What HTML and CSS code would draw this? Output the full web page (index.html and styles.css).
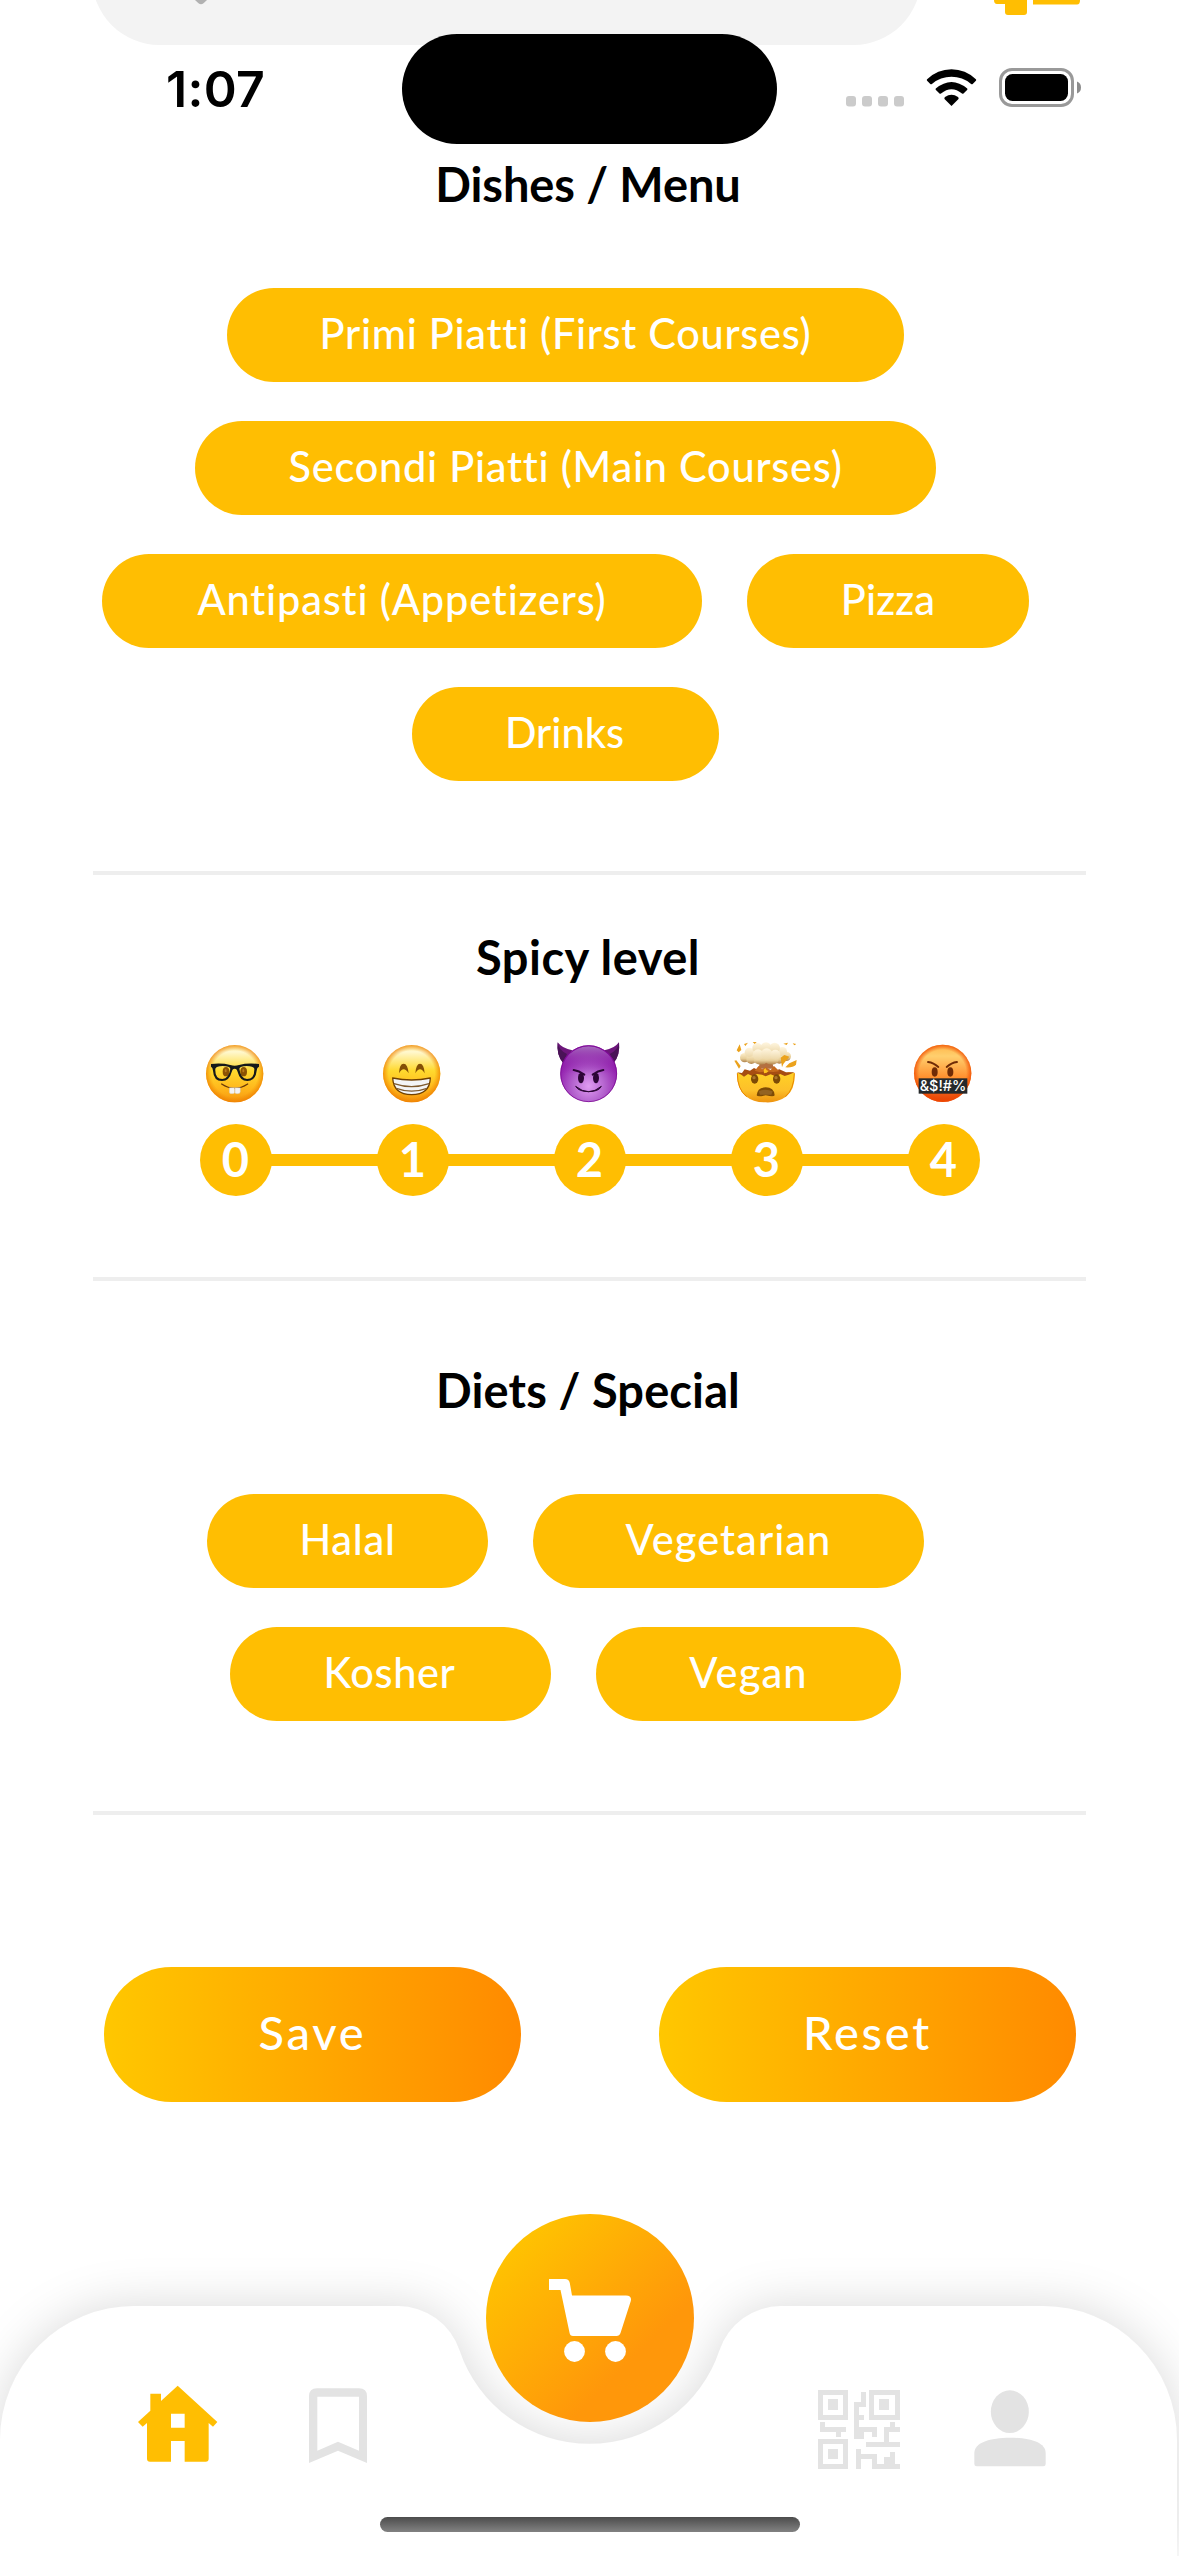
FILE: index.html
```html
<!DOCTYPE html>
<html lang="en">
<head>
<meta charset="utf-8">
<title>Filters</title>
<link rel="stylesheet" href="styles.css">
</head>
<body>
<div class="screen">
  <main class="content">
    <div class="search-row">
      <div class="search-bar">
        <svg class="search-mark" width="12" height="5" viewBox="0 0 12 5"><path d="M0 0H12L8.5 3.2Q6 5.2 3.5 3.2Z" fill="#b1b1b1"/></svg>
      </div>
      <svg class="filter-icon" width="87" height="16" viewBox="0 0 87 16" fill="#ffbe02">
        <path d="M0 0H33V12Q33 15 30 15H14Q11 15 11 12V4H3Q0 4 0 0Z"/>
        <path d="M39 0H86Q86 4.5 83 4.5H39Z"/>
      </svg>
    </div>

    <section class="group dishes">
      <h2 class="title">Dishes / Menu</h2>
      <div class="pills">
        <button class="pill w-primi">Primi Piatti (First Courses)</button>
        <button class="pill w-secondi">Secondi Piatti (Main Courses)</button>
        <button class="pill w-antipasti">Antipasti (Appetizers)</button>
        <button class="pill w-pizza">Pizza</button>
        <button class="pill w-drinks">Drinks</button>
      </div>
    </section>

    <section class="group spicy">
      <h2 class="title title-wide">Spicy level</h2>
      <svg width="0" height="0" class="defs">
        <defs>
          <linearGradient id="face" x1="0" y1="0" x2="0" y2="1">
            <stop offset="0" stop-color="#fff3a0"/><stop offset=".12" stop-color="#fff8cf"/><stop offset=".45" stop-color="#ffd92e"/><stop offset=".75" stop-color="#ffb81c"/><stop offset="1" stop-color="#f6960f"/>
          </linearGradient>
          <radialGradient id="rim" cx=".5" cy=".5" r=".5">
            <stop offset=".8" stop-color="#f08a00" stop-opacity="0"/><stop offset="1" stop-color="#ee7d00" stop-opacity=".75"/>
          </radialGradient>
          <radialGradient id="purple" cx=".5" cy=".72" r=".62">
            <stop offset="0" stop-color="#e09cf2"/><stop offset=".45" stop-color="#b565cf"/><stop offset="1" stop-color="#8a0fa6"/>
          </radialGradient>
          <linearGradient id="purpletop" x1="0" y1="0" x2="0" y2="1">
            <stop offset="0" stop-color="#a66bbd"/><stop offset=".5" stop-color="#8f1cab" stop-opacity="0"/>
          </linearGradient>
          <linearGradient id="angry" x1="0" y1="0" x2="0" y2="1">
            <stop offset="0" stop-color="#ffb648"/><stop offset=".2" stop-color="#ffcf6e"/><stop offset=".6" stop-color="#ff8b2a"/><stop offset="1" stop-color="#e63d05"/>
          </linearGradient>
          <radialGradient id="angryrim" cx=".5" cy=".5" r=".5">
            <stop offset=".82" stop-color="#f04a00" stop-opacity="0"/><stop offset="1" stop-color="#f04a00" stop-opacity=".8"/>
          </radialGradient>
          <linearGradient id="cloud" x1="0" y1="0" x2="0" y2="1">
            <stop offset="0" stop-color="#fff0cc"/><stop offset=".6" stop-color="#e6cd98"/><stop offset="1" stop-color="#b08148"/>
          </linearGradient>
          <linearGradient id="puff" x1="0" y1="0" x2="0" y2="1">
            <stop offset="0" stop-color="#fff6e0"/><stop offset="1" stop-color="#ecd7a8"/>
          </linearGradient>
          <linearGradient id="bowl" x1="0" y1="0" x2="0" y2="1">
            <stop offset="0" stop-color="#ffd125"/><stop offset=".6" stop-color="#fdc02a"/><stop offset="1" stop-color="#ee930e"/>
          </linearGradient>
        </defs>
      </svg>
      <div class="levels">
        <div class="level">
          <svg class="emoji" viewBox="0 0 192 186" role="img" aria-label="Nerd face">
            <circle cx="95" cy="95" r="86" fill="url(#face)"/><circle cx="95" cy="95" r="86" fill="url(#rim)"/>
            <ellipse cx="69" cy="89" rx="10" ry="14" fill="#8c5203"/><ellipse cx="122" cy="89" rx="10" ry="14" fill="#8c5203"/>
            <ellipse cx="68" cy="86" rx="3" ry="5" fill="#b9791a"/><ellipse cx="121" cy="86" rx="3" ry="5" fill="#b9791a"/>
            <path fill-rule="evenodd" d="M24 66Q56 62 82 69Q95 73 108 69Q134 62 168 66V74Q162 76 161 86Q158 117 133 117Q111 117 104 90Q102 80 95 80Q88 80 86 90Q79 117 57 117Q32 117 30 86Q29 76 24 74ZM37 80Q35 111 58 111Q78 110 82 80Q80 73 59 72Q40 72 37 80ZM109 80Q113 110 132 111Q155 111 154 80Q151 72 131 72Q111 73 109 80Z" fill="#15181a"/>
            <path d="M56 126Q95 152 134 126" fill="none" stroke="#6b3908" stroke-width="4" stroke-linecap="round"/>
            <path d="M79 137H95V152Q94 156 86 155Q78 155 79 149ZM96 137H112V149Q112 155 105 155Q96 156 96 152Z" fill="#f4f4f4" stroke="#c9b9a3" stroke-width="1"/>
          </svg>
          <span class="dot">0</span>
        </div>
        <div class="level">
          <svg class="emoji" viewBox="0 0 192 186" role="img" aria-label="Beaming face">
            <circle cx="95" cy="95" r="86" fill="url(#face)"/><circle cx="95" cy="95" r="86" fill="url(#rim)"/>
            <path d="M57 94Q58 65 71 65Q83 65 86 94Q78 82 71 82Q64 82 57 94ZM106 94Q108 65 120 65Q132 65 134 94Q127 82 120 82Q113 82 106 94Z" fill="#845005"/>
            <path d="M38 108Q95 120 151 108Q149 158 95 158Q41 158 38 108Z" fill="#f3f5f7" stroke="#704000" stroke-width="4" stroke-linejoin="round"/>
            <path d="M42 125Q95 143 147 125M49 139Q95 156 141 139" fill="none" stroke="#7e5a2e" stroke-width="3.5"/>
          </svg>
          <span class="dot">1</span>
        </div>
        <div class="level">
          <svg class="emoji" viewBox="0 0 192 186" role="img" aria-label="Smiling face with horns">
            <path d="M2 1Q16 20 46 25L18 62Q-2 40 2 1ZM186 1Q172 20 142 25L170 62Q190 40 186 1Z" fill="#6d167b"/>
            <path d="M2 1Q4 24 30 36L18 62Q-2 40 2 1ZM186 1Q184 24 158 36L170 62Q190 40 186 1Z" fill="#4a1357"/>
            <circle cx="95" cy="95" r="85" fill="url(#purple)"/><circle cx="95" cy="95" r="82" fill="url(#purpletop)"/><circle cx="95" cy="95" r="84" fill="none" stroke="#7c0a93" stroke-width="2.500"/>
            <ellipse cx="72" cy="108" rx="9" ry="16" fill="#2c0536"/><ellipse cx="117" cy="108" rx="9" ry="16" fill="#2c0536"/>
            <path d="M50 84Q66 86 82 98M139 84Q123 86 107 98" fill="none" stroke="#2c0536" stroke-width="6" stroke-linecap="round"/>
            <path d="M56 133Q95 165 133 133Q125 149 95 149Q65 149 56 133Z" fill="#2c0536" stroke="#2c0536" stroke-width="3" stroke-linejoin="round"/>
          </svg>
          <span class="dot">2</span>
        </div>
        <div class="level">
          <svg class="emoji" viewBox="0 0 192 186" role="img" aria-label="Exploding head">
            <path d="M9 92L22 94L30 99L42 91L55 96L69 90L84 94L95 98L110 92L124 97L139 91L152 97L164 90L182 93Q184 140 158 163Q130 183 95 181Q60 182 34 162Q8 140 9 92Z" fill="url(#bowl)"/>
            <path d="M10 94Q10 142 38 164M181 94Q180 142 154 164" fill="none" stroke="#e88600" stroke-width="3"/>
            <path d="M9 91L24 93L32 82L48 86L60 78L80 88L95 82L118 88L136 82L156 91L182 91L164 98L152 102L139 96L124 103L110 97L95 103L84 98L69 96L55 102L42 96L30 104L22 98Z" fill="#a64d12"/>
            <path d="M77 58H117Q112 70 124 80H68Q80 70 77 58Z" fill="#b47040"/>
            <path d="M62 86L74 72L84 82L95 76L110 84L120 72L136 88L116 90L95 88L78 91Z" fill="#c66a1d"/>
            <circle cx="32" cy="47" r="14" fill="url(#cloud)"/><circle cx="157" cy="43" r="14" fill="url(#cloud)"/>
            <circle cx="52" cy="51" r="15" fill="url(#cloud)"/><circle cx="136" cy="50" r="15" fill="url(#cloud)"/>
            <ellipse cx="80" cy="53" rx="21" ry="15" fill="url(#cloud)"/><ellipse cx="113" cy="53" rx="21" ry="15" fill="url(#cloud)"/>
            <circle cx="46" cy="31" r="14" fill="url(#puff)"/><circle cx="145" cy="29" r="14" fill="url(#puff)"/>
            <circle cx="70" cy="18" r="15" fill="url(#puff)"/><circle cx="122" cy="18" r="16" fill="url(#puff)"/><circle cx="96" cy="18" r="17" fill="url(#puff)"/>
            <circle cx="72" cy="38" r="16" fill="url(#puff)"/><circle cx="98" cy="36" r="17" fill="url(#puff)"/><circle cx="124" cy="38" r="15" fill="url(#puff)"/>
            <path d="M8 25L17 7L22 24L14 31ZM56 0H68L62 6ZM30 6L42 2L34 12ZM1 56L7 55L20 72L15 80ZM140 47L151 39L166 44L148 66L144 76ZM154 76L166 64L188 54L186 68Q176 78 154 76ZM148 5L162 2L158 9ZM176 4L187 6L181 10Z" fill="#eba21c"/>
            <path d="M89 83L94 78L98 85L104 87L98 92L90 94Z" fill="#ffc31d"/>
            <ellipse cx="62" cy="111" rx="11" ry="14" fill="#7d4a05"/><ellipse cx="128" cy="111" rx="11" ry="14" fill="#7d4a05"/>
            <circle cx="60" cy="107" r="5" fill="#ad762e"/><circle cx="126" cy="107" r="5" fill="#ad762e"/>
            <path d="M68 160Q70 136 95 136Q120 136 122 160Q120 166 95 160Q70 166 68 160Z" fill="#7e4b05"/>
            <path d="M74 148Q95 138 116 148L112 158H78Z" fill="#946322"/>
          </svg>
          <span class="dot">3</span>
        </div>
        <div class="level">
          <svg class="emoji" viewBox="0 0 192 186" role="img" aria-label="Face with symbols on mouth">
            <circle cx="95" cy="94" r="86" fill="url(#angry)"/><circle cx="95" cy="94" r="86" fill="url(#angryrim)"/>
            <ellipse cx="71" cy="90" rx="9" ry="14" fill="#6f2b06"/><ellipse cx="118" cy="90" rx="9" ry="14" fill="#6f2b06"/>
            <path d="M51 60Q68 62 82 75M138 60Q121 62 107 75" fill="none" stroke="#6f2b06" stroke-width="5.500" stroke-linecap="round"/>
            <rect x="23" y="109" width="146" height="46" fill="#26292b"/>
            <text x="96" y="148" text-anchor="middle" textLength="140" lengthAdjust="spacingAndGlyphs" class="swear">&amp;$!#%</text>
          </svg>
          <span class="dot">4</span>
        </div>
      </div>
    </section>

    <section class="group diets">
      <h2 class="title title-mid">Diets / Special</h2>
      <div class="pills">
        <button class="pill w-halal">Halal</button>
        <button class="pill w-vegetarian">Vegetarian</button>
        <button class="pill w-kosher">Kosher</button>
        <button class="pill w-vegan">Vegan</button>
      </div>
    </section>

    <div class="actions">
      <button class="action">Save</button>
      <button class="action">Reset</button>
    </div>
  </main>

  <header class="status">
    <span class="time">1:07</span>
    <span class="island"></span>
    <svg class="status-icons" width="236" height="40" viewBox="0 0 236 40">
      <g fill="#cbcbcb"><rect x="0" y="28" width="10" height="10.500" rx="3"/><rect x="16" y="28" width="10" height="10.500" rx="3"/><rect x="32" y="28" width="10" height="10.500" rx="3"/><rect x="48" y="28" width="10" height="10.500" rx="3"/></g>
      <g transform="translate(80.500 1)">
        <path d="M25 37L18 30Q17.500 29 18.500 28Q25 23.500 31.500 28Q32.500 29 32 30Z"/>
        <path d="M9.300 19.500Q25 6.500 40.700 19.500Q41.300 20.300 40.600 21L37 24.600Q36.300 25 35.500 24.500Q25 16 14.500 24.500Q13.700 25 13 24.600L9.400 21Q8.700 20.300 9.300 19.500Z"/>
        <path d="M.6 10.200Q11 .2 25 .2Q39 .2 49.400 10.200Q50.100 11 49.400 11.800L46.200 15Q45.400 15.500 44.600 14.900Q36 7.800 25 7.800Q14 7.800 5.400 14.900Q4.600 15.500 3.800 15L.6 11.800Q-.1 11 .6 10.200Z"/>
      </g>
      <rect x="154.500" y="1.500" width="72" height="36" rx="11.500" fill="none" stroke="#999" stroke-width="3"/>
      <rect x="159" y="6" width="63" height="27" rx="7.500"/>
      <path d="M231 13.500Q235 15 235 19.500Q235 24 231 25.500Z" fill="#8c8c8c"/>
    </svg>
  </header>

  <nav class="tabbar">
    <svg class="tabbar-shape" width="1179" height="250" viewBox="0 0 1179 250">
      <path d="M0 134A134 134 0 0 1 134 0H398A65 65 0 0 1 459.600 44.400A137 137 0 0 0 719.400 44.400A65 65 0 0 1 781 0H1043A134 134 0 0 1 1177 134V250H0Z" fill="#fff"/>
    </svg>
    <div class="tabs">
      <svg width="80" height="78" viewBox="54 43 240 234" fill="#ffbe02"><path d="M173 45L292 154L279 168L266 157V264Q266 273 257 273H194V211H153V273H90Q81 273 81 264V157L68 168L54 154L91 120V69H123V91ZM153 129V171H194V129Z" fill-rule="evenodd"/></svg>
      <svg class="tab-bookmark" width="58" height="78" viewBox="567 50 174 234" fill="#e3e3e3"><path d="M567 78Q567 54 591 54H717Q741 54 741 78V278L654 241L567 278ZM592 79V241L654 214L717 241V79Z" fill-rule="evenodd"/></svg>
      <svg class="tab-qr" width="82" height="79" viewBox="54 60 246 237" fill="#e3e3e3" shape-rendering="crispEdges">
        <path d="M54 60H144V150H54ZM69 75V135H129V75ZM207 60H300V150H207ZM222 75V135H285V75ZM54 207H144V297H54ZM69 222V282H129V222Z" fill-rule="evenodd"/>
        <path d="M84 87H114V120H84ZM237 87H267V120H237ZM84 237H114V267H84Z"/>
        <path d="M183 66H198V111H177V135H192V150H177V171H231V201H216V186H192V207H162V96H183Z"/>
        <path d="M60 156H75V171H138V186H123V201H108V186H60Z"/>
        <path d="M270 156H285V171H300V186H267V216H300V231H198V216H252V171H270Z"/>
        <path d="M168 237H183V252H231V282H252V261H270V246H285V282H300V297H216V267H183V297H168Z"/>
      </svg>
      <svg class="tab-user" width="72" height="77" viewBox="523 59 216 231" fill="#e3e3e3"><ellipse cx="630.500" cy="124" rx="57" ry="64"/><path d="M524 248C524 216 572 202 631 202S738 216 738 248V281Q738 288 731 288H531Q524 288 524 281Z"/></svg>
    </div>
    <div class="cart">
      <svg width="82" height="84" viewBox="0 0 82 84" fill="#fff"><path d="M0 0H16Q20 0 20.800 4L23 16.500H77Q83 16.500 81.800 22L71.500 54Q70.500 57 67.500 57H24Q21 57 20.600 54L11.500 11H0Z"/><circle cx="25.500" cy="72.500" r="10.400"/><circle cx="66.500" cy="72.500" r="10.400"/></svg>
    </div>
    <span class="home-indicator"></span>
  </nav>
</div>
</body>
</html>
```
FILE: styles.css
```css
* { box-sizing: border-box; }

body {
  margin: 0;
  background: #fff;
  font-family: Lato, "Open Sans", sans-serif;
}

.screen {
  position: relative;
  width: 1179px;
  height: 2556px;
  overflow: hidden;
}

.content { padding: 0 93px; }

/* bottom edge of the search bar, scrolled under the status bar */
.search-row {
  display: flex;
  justify-content: space-between;
  height: 45px;
  margin: 0 0 111px -1px;
}

.search-bar {
  width: 829px;
  height: 135px;
  margin-top: -90px;
  padding: 90px 0 0 103px;
  border-radius: 68px;
  background: #f3f3f3;
}

.search-mark, .filter-icon { display: block; }
.filter-icon { margin-right: 5px; }

.group { border-bottom: 4px solid #eee; }

.title {
  margin: 0;
  height: 56px;
  padding-right: 3px;
  line-height: 56px;
  font-size: 47px;
  font-weight: 700;
  letter-spacing: -0.1px;
  text-align: center;
}

.title-wide { letter-spacing: 0.48px; }
.title-mid { letter-spacing: 0.1px; }

.dishes { height: 719px; }
.spicy { height: 406px; padding-top: 54px; }
.diets { height: 534px; padding-top: 81px; }

.pills {
  display: flex;
  flex-wrap: wrap;
  justify-content: center;
  gap: 39px 45px;
  margin-top: 76px;
  padding-right: 48px;
}

.pill {
  height: 94px;
  padding: 0 0 4px;
  border: 0;
  border-radius: 47px;
  background: #ffbe02;
  color: #fff;
  font: 500 41.5px Lato, sans-serif;
  white-space: nowrap;
}

.w-primi { width: 677px; letter-spacing: 0.72px; }
.w-secondi { width: 741px; letter-spacing: 0.76px; }
.w-antipasti { width: 600px; letter-spacing: 0.84px; }
.w-pizza { width: 282px; letter-spacing: 0.15px; }
.w-drinks { width: 307px; padding-right: 2px; }
.w-halal { width: 281px; letter-spacing: 0.74px; }
.w-vegetarian { width: 391px; letter-spacing: 1.05px; }
.w-kosher { width: 321px; padding-right: 2px; letter-spacing: 0.6px; }
.w-vegan { width: 305px; letter-spacing: 1.13px; }

.defs { display: block; }

.levels {
  display: flex;
  justify-content: space-between;
  width: 780px;
  margin: 57px auto 0;
  background: linear-gradient(#ffbe02, #ffbe02) 50% 112px / 700px 12px no-repeat;
}

.level {
  display: flex;
  flex-direction: column;
  align-items: center;
  width: 72px;
}

.emoji {
  width: 64px;
  height: 62px;
  margin-bottom: 20px;
  margin-left: -2px;
  overflow: visible;
}

.swear {
  fill: #fff;
  font: 500 44px Inter, sans-serif;
}

.dot {
  width: 72px;
  height: 72px;
  border-radius: 50%;
  background: #ffbe02;
  color: #fff;
  font-size: 47px;
  font-weight: 700;
  line-height: 71px;
  text-align: center;
}

.actions {
  display: flex;
  justify-content: space-between;
  margin: 152px 10px 0 11px;
}

.action {
  width: 417px;
  height: 135px;
  padding: 0 0 5px;
  border: 0;
  border-radius: 68px;
  background: linear-gradient(90deg, #ffc700, #ff8a00);
  color: #fff;
  font: 500 47px Lato, sans-serif;
  letter-spacing: 2.75px;
}

.status {
  position: absolute;
  inset: 0 0 auto;
  height: 178px;
  display: flex;
  align-items: center;
  padding: 0 97px 0 166px;
}

.time {
  width: 236px;
  font: 600 50px/60px Inter, sans-serif;
  letter-spacing: 0.3px;
  padding-bottom: 1px;
}

.island {
  width: 375px;
  height: 110px;
  border-radius: 55px;
  background: #000;
}

.status-icons { margin: 0 0 3px auto; }

.tabbar {
  position: absolute;
  left: 0;
  bottom: 0;
  width: 100%;
  height: 250px;
}

.tabbar-shape {
  position: absolute;
  inset: 0;
  overflow: visible;
  filter: drop-shadow(0 0 24px rgba(0, 0, 0, 0.15));
}

.tabs {
  position: relative;
  display: flex;
  align-items: flex-start;
  padding: 79px 0 0 138px;
}

.tabs .tab-bookmark { margin: 2px 0 0 91px; }
.tabs .tab-qr { margin: 5px 0 0 451px; }
.tabs .tab-user { margin: 5px 0 0 74px; }

.cart {
  position: absolute;
  left: 486px;
  top: -92px;
  width: 208px;
  height: 208px;
  display: grid;
  place-items: center;
  border-radius: 50%;
  background: linear-gradient(135deg, #ffc700 8%, #ff970a 70%);
}

.cart svg { margin-top: 6px; }

.home-indicator {
  position: absolute;
  left: 380px;
  bottom: 24px;
  width: 420px;
  height: 15px;
  border-radius: 8px;
  background: linear-gradient(#4c4c4c, #828282);
}
```
